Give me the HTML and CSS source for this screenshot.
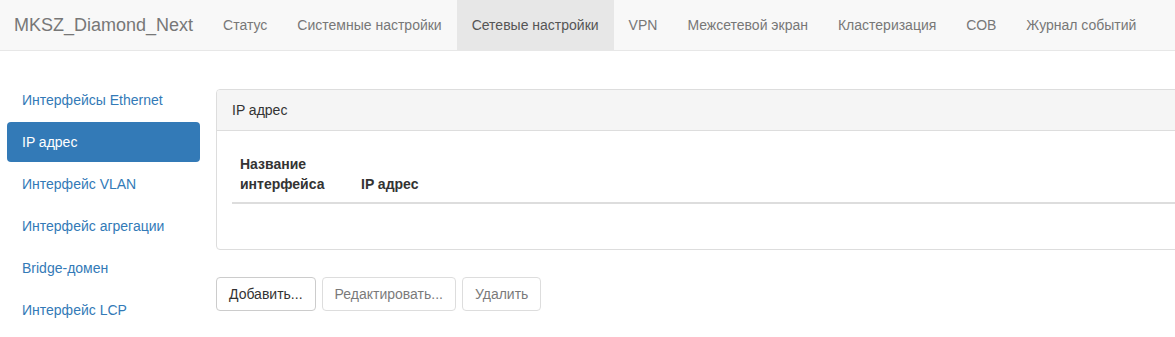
FILE: index.html
```html
<!DOCTYPE html>
<html lang="ru">
<head>
  <meta charset="UTF-8" />
  <title>MKSZ_Diamond_Next</title>
  <link rel="stylesheet" href="styles.css">
</head>
<body>
  <nav class="navbar">
    <a class="brand" href="#">MKSZ_Diamond_Next</a>
    <ul class="nav-links">
      <li><a href="#">Статус</a></li>
      <li><a href="#">Системные настройки</a></li>
      <li class="active"><a href="#">Сетевые настройки</a></li>
      <li><a href="#">VPN</a></li>
      <li><a href="#">Межсетевой экран</a></li>
      <li><a href="#">Кластеризация</a></li>
      <li><a href="#">СОВ</a></li>
      <li><a href="#">Журнал событий</a></li>
    </ul>
  </nav>

  <div class="page">
    <!-- Sidebar -->
    <ul class="pills">
      <li><a href="#">Интерфейсы Ethernet</a></li>
      <li class="active"><a href="#">IP адрес</a></li>
      <li><a href="#">Интерфейс VLAN</a></li>
      <li><a href="#">Интерфейс агрегации</a></li>
      <li><a href="#">Bridge-домен</a></li>
      <li><a href="#">Интерфейс LCP</a></li>
    </ul>

    <!-- Main -->
    <div class="main">
      <div class="panel">
        <div class="panel-heading">IP адрес</div>
        <div class="panel-body">
          <table class="table">
            <thead>
              <tr>
                <th class="col-name">Название интерфейса</th>
                <th>IP адрес</th>
              </tr>
            </thead>
            <tbody></tbody>
          </table>
        </div>
      </div>

      <div class="actions">
        <button class="btn">Добавить...</button>
        <button class="btn" disabled>Редактировать...</button>
        <button class="btn" disabled>Удалить</button>
      </div>
    </div>
  </div>
</body>
</html>
```

FILE: styles.css
```css
body {
  font-family: 'Liberation Sans', Arial, sans-serif;
  font-size: 14px;
  line-height: 20px;
  color: #333;
  background-color: #fff;
  margin: 0;
  overflow-x: hidden;
}
a {
  text-decoration: none;
}
ul {
  list-style: none;
  margin: 0;
  padding: 0;
}
.navbar {
  display: flex;
  height: 50px;
  background-color: #f8f8f8;
  border-bottom: 1px solid #e7e7e7;
}
.brand {
  padding: 15px 15px 15px 14px;
  font-size: 18px;
  line-height: 20px;
  color: #777;
}
.nav-links {
  display: flex;
}
.nav-links a {
  display: block;
  padding: 15px;
  color: #777;
}
.nav-links .active a {
  background-color: #e7e7e7;
  color: #555;
}
.page {
  display: flex;
  padding: 29px 0 0 7px;
}
.pills {
  width: 193px;
  flex-shrink: 0;
}
.pills li + li {
  margin-top: 2px;
}
.pills a {
  display: block;
  padding: 10px 15px;
  border-radius: 4px;
  color: #337ab7;
}
.pills .active a {
  background-color: #337ab7;
  color: #fff;
}
.main {
  margin-left: 16px;
  padding-top: 9px;
  width: 1100px;
  flex-shrink: 0;
}
.panel {
  border: 1px solid #ddd;
  border-radius: 4px;
  margin-bottom: 27px;
}
.panel-heading {
  padding: 10px 15px;
  background-color: #f5f5f5;
  border-bottom: 1px solid #ddd;
  border-radius: 3px 3px 0 0;
}
.panel-body {
  padding: 15px;
}
.table {
  width: 100%;
  border-collapse: collapse;
  margin-bottom: 30px;
}
.table th {
  text-align: left;
  vertical-align: bottom;
  padding: 8px;
  border-bottom: 2px solid #ddd;
}
.table .col-name {
  width: 105px;
}
.actions {
  display: flex;
  gap: 6px;
}
.btn {
  font-family: inherit;
  font-size: 14px;
  line-height: 20px;
  padding: 6px 12px;
  color: #333;
  background-color: #fff;
  border: 1px solid #ccc;
  border-radius: 4px;
  cursor: pointer;
}
.btn:disabled {
  opacity: 0.65;
  cursor: not-allowed;
}
```
